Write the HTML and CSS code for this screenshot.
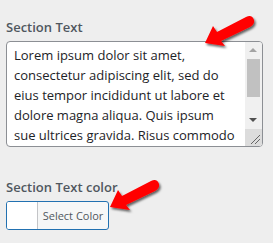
FILE: index.html
```html
<!DOCTYPE html>
<html>
<head>
<meta charset="utf-8">
<link rel="stylesheet" href="styles.css">
</head>
<body>
<div class="panel">
  <div class="field">
    <label class="label">Section Text</label>
    <div class="textarea">
      <div class="text">Lorem ipsum dolor sit amet,<br>consectetur adipiscing elit, sed do<br>eius tempor incididunt ut labore et<br>dolore magna aliqua. Quis ipsum<br>sue ultrices gravida. Risus commodo</div>
      <div class="scrollbar">
        <div class="arrow up"></div>
        <div class="track"><div class="thumb"></div></div>
        <div class="arrow down"></div>
        <div class="grip">
          <svg width="17" height="17" viewBox="0 0 17 17"><path d="M6 15 L15 6 M10 15 L15 10" stroke="#666" stroke-width="1"/></svg>
        </div>
      </div>
    </div>
  </div>
  <div class="field field2">
    <label class="label">Section Text color</label>
    <button class="color-btn"><span class="swatch"></span><span class="btn-text">Select Color</span></button>
  </div>
</div>
<svg class="pointer p1" width="60" height="40" viewBox="0 0 60 40">
  <defs><filter id="sh" x="-20%" y="-20%" width="150%" height="150%"><feDropShadow dx="1.5" dy="2" stdDeviation="1.2" flood-color="#000" flood-opacity="0.6"/></filter></defs>
  <path filter="url(#sh)" d="M5 29 L13 12 L17 18 L46 3 Q52 0 54 6 Q55 10 50 13 L21 27 L25 32 Z" fill="#f00"/>
</svg>
<svg class="pointer p2" width="60" height="40" viewBox="0 0 60 40">
  <path filter="url(#sh)" d="M5 29 L13 12 L17 18 L46 3 Q52 0 54 6 Q55 10 50 13 L21 27 L25 32 Z" fill="#f00"/>
</svg>
</body>
</html>
```
FILE: styles.css
```css
html, body {
  margin: 0;
  padding: 0;
  background: #eeeeee;
  width: 273px;
  height: 243px;
  overflow: hidden;
}
body {
  position: relative;
  font-family: "Open Sans", "Noto Sans", sans-serif;
}
.panel {
  padding: 18px 0 0 6px;
  display: flex;
  flex-direction: column;
}
.field {
  display: flex;
  flex-direction: column;
}
.field2 {
  margin-top: 31px;
}
.label {
  font-size: 13px;
  font-weight: 600;
  color: #50575e;
  line-height: 18px;
  margin-bottom: 5px;
}
.textarea {
  width: 257px;
  height: 106px;
  box-sizing: border-box;
  border: 1px solid #8c8f94;
  border-radius: 4px;
  background: #fff;
  display: flex;
  overflow: hidden;
}
.text {
  flex: 1;
  min-width: 0;
  padding: 3px 2px 0 7px;
  font-size: 13px;
  line-height: 20px;
  white-space: nowrap;
  color: #1d2327;
  overflow: hidden;
}
.scrollbar {
  width: 17px;
  flex: none;
  background: #f0f0f0;
  display: flex;
  flex-direction: column;
}
.arrow {
  height: 17px;
  flex: none;
  position: relative;
}
.arrow::after {
  content: "";
  position: absolute;
  left: 4px;
  top: 6px;
  border-left: 4px solid transparent;
  border-right: 4px solid transparent;
}
.arrow.up::after { border-bottom: 4px solid #a3a3a3; }
.arrow.down::after { border-top: 4px solid #505050; }
.track {
  flex: 1;
  padding: 0 2px;
}
.thumb {
  height: 38px;
  background: #c1c1c1;
}
.grip {
  height: 17px;
  flex: none;
  background: #dcdcdc;
}
.grip svg { display: block; }
.color-btn {
  width: 103px;
  height: 29px;
  padding: 0;
  border: 1px solid #2271b1;
  border-radius: 3px;
  background: #f6f7f7;
  display: flex;
  overflow: hidden;
  font-family: inherit;
  cursor: pointer;
}
.swatch {
  width: 30px;
  height: 100%;
  background: #fff;
  border-right: 1px solid #c3c4c7;
  flex: none;
}
.btn-text {
  flex: 1;
  font-size: 11px;
  line-height: 27px;
  color: #50575e;
  text-align: center;
}
.pointer {
  position: absolute;
}
.p1 { left: 200px; top: 14px; }
.p2 { left: 105px; top: 178px; }
```
